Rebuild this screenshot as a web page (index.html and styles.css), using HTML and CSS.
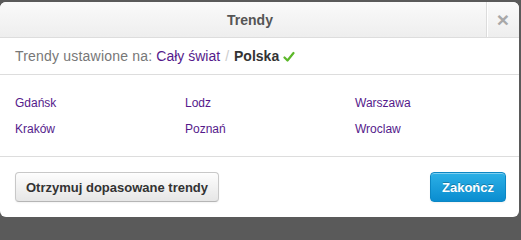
FILE: index.html
```html
<!DOCTYPE html>
<html lang="pl">
<head>
<meta charset="utf-8">
<title>Trendy</title>
<link rel="stylesheet" href="styles.css">
</head>
<body>
<div class="modal">
  <div class="modal-header">
    <h3 class="modal-title">Trendy</h3>
    <button class="close" type="button">×</button>
  </div>
  <div class="current">
    <span class="label">Trendy ustawione na:</span>
    <a class="link" href="#">Cały świat</a>
    <span class="sep">/</span>
    <strong class="selected">Polska</strong>
    <svg class="check" width="12" height="12" viewBox="0 0 12 12" aria-hidden="true"><path d="M1.5 6.5 L4.5 9.5 L10.5 2" fill="none" stroke="#5cb82a" stroke-width="2.2" stroke-linecap="round" stroke-linejoin="round"/></svg>
  </div>
  <div class="cities">
    <a class="link" href="#">Gdańsk</a>
    <a class="link" href="#">Lodz</a>
    <a class="link" href="#">Warszawa</a>
    <a class="link" href="#">Kraków</a>
    <a class="link" href="#">Poznań</a>
    <a class="link" href="#">Wroclaw</a>
  </div>
  <div class="modal-footer">
    <button class="btn" type="button">Otrzymuj dopasowane trendy</button>
    <button class="btn btn-primary" type="button">Zakończ</button>
  </div>
</div>
</body>
</html>
```
FILE: styles.css
```css
html, body {
  margin: 0;
  padding: 0;
  background: #5a5a5a;
}
body {
  font-family: "Liberation Sans", Arial, sans-serif;
  width: 521px;
  height: 219px;
  overflow: hidden;
}
.modal {
  margin-top: 2px;
  width: 519px;
  height: 215px;
  background: #fff;
  border-radius: 6px;
  overflow: hidden;
  display: flex;
  flex-direction: column;
}
.modal-header {
  height: 35px;
  border-bottom: 1px solid #ddd;
  background: linear-gradient(#fafafa, #eeeeee);
  display: flex;
  align-items: center;
}
.modal-title {
  margin: 0;
  flex: 1;
  text-align: center;
  font-size: 14px;
  font-weight: bold;
  color: #555;
  padding-left: 14px;
}
.close {
  width: 33px;
  height: 35px;
  border: 0;
  border-left: 1px solid #dcdcdc;
  box-shadow: inset 1px 0 0 #fff;
  background: transparent;
  color: #a8a8a8;
  font-family: "Liberation Sans", Arial, sans-serif;
  font-size: 21px;
  font-weight: bold;
  line-height: 35px;
  padding: 0;
  text-align: center;
}
.current {
  height: 36px;
  border-bottom: 1px solid #ddd;
  display: flex;
  align-items: center;
  padding-left: 15px;
  font-size: 14px;
  color: #777;
}
.current .label {
  margin-right: 4px;
  letter-spacing: 0.2px;
}
.link {
  color: #551a8b;
  text-decoration: none;
}
.sep {
  color: #ccc;
  margin: 0 5px;
}
.selected {
  color: #333;
  font-weight: bold;
}
.check {
  margin-left: 4px;
  margin-top: 2px;
}
.cities {
  height: 82px;
  border-bottom: 1px solid #ddd;
  box-sizing: border-box;
  padding: 15px 0 0 15px;
  display: grid;
  grid-template-columns: 170px 170px 170px;
  grid-auto-rows: 26px;
  font-size: 12px;
  align-items: center;
}
.modal-footer {
  flex: 1;
  display: flex;
  justify-content: space-between;
  align-items: flex-start;
  padding: 15px 13px 0 15px;
}
.btn {
  height: 30px;
  padding: 0 10px;
  border: 1px solid #c8c8c8;
  border-bottom-color: #b5b5b5;
  border-radius: 4px;
  background: linear-gradient(#fdfdfd, #e6e6e6);
  color: #333;
  font-family: "Liberation Sans", Arial, sans-serif;
  font-size: 13px;
  font-weight: bold;
  box-shadow: inset 0 1px 0 rgba(255,255,255,0.4), 0 1px 2px rgba(0,0,0,0.05);
}
.btn-primary {
  padding: 0 11px;
  border-color: #0c87c4;
  background: linear-gradient(#2cb0e6, #0a8dd0);
  color: #fff;
  text-shadow: 0 -1px 0 rgba(0,0,0,0.25);
}
```
